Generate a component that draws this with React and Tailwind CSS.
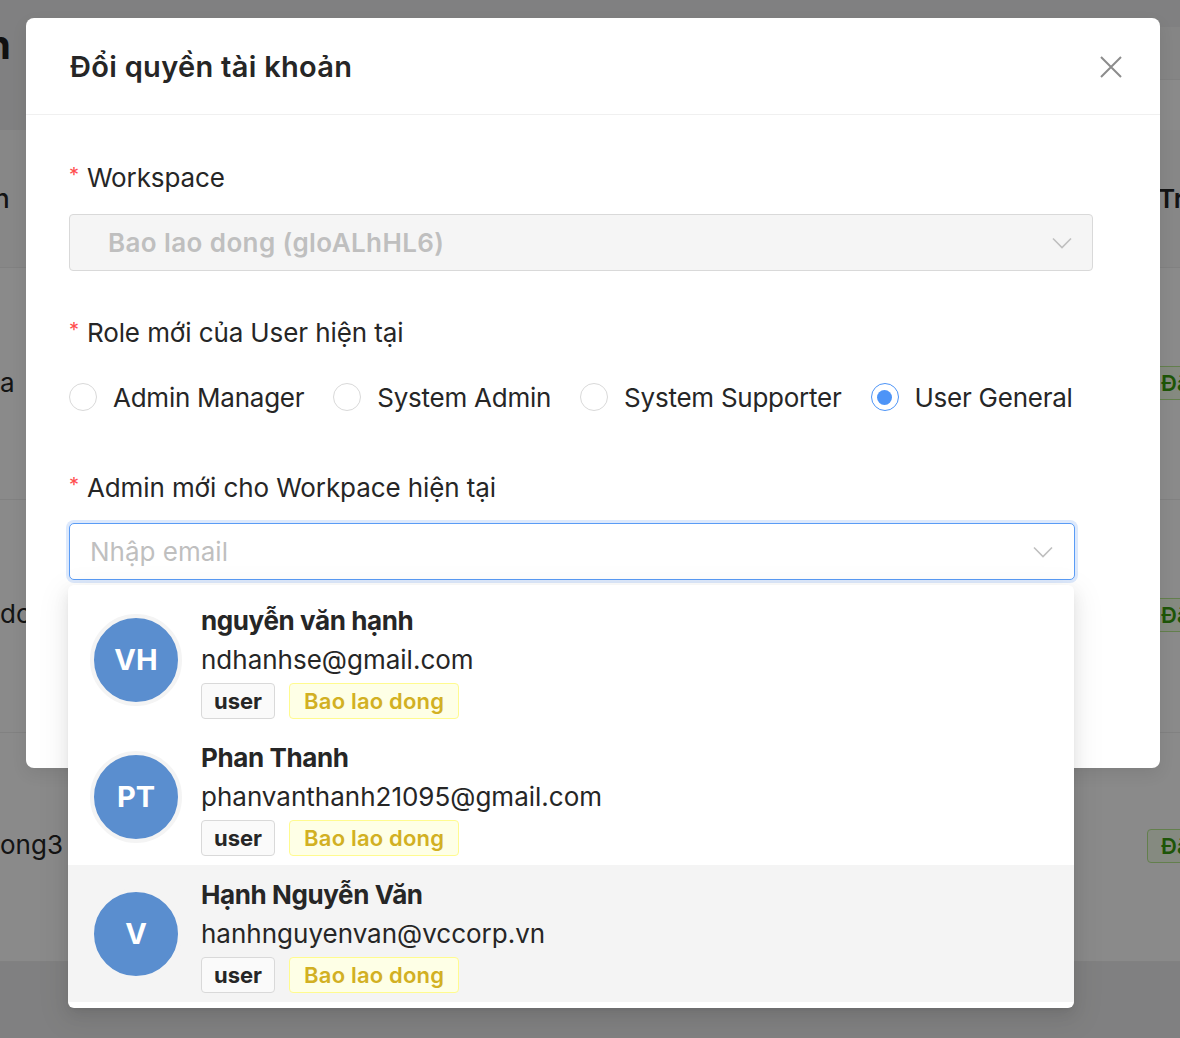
const users = [
  { initials: 'VH', name: 'nguyễn văn hạnh', email: 'ndhanhse@gmail.com', active: false },
  { initials: 'PT', name: 'Phan Thanh', email: 'phanvanthanh21095@gmail.com', active: false },
  { initials: 'V', name: 'Hạnh Nguyễn Văn', email: 'hanhnguyenvan@vccorp.vn', active: true },
];

const roles = [
  { label: 'Admin Manager', checked: false },
  { label: 'System Admin', checked: false },
  { label: 'System Supporter', checked: false },
  { label: 'User General', checked: true },
];

const Chevron = () => (
  <svg width="20" height="12" viewBox="0 0 20 12" fill="none" stroke="#bfbfbf" strokeWidth="1.6">
    <path d="M1 1.5 L10 10.5 L19 1.5" />
  </svg>
);

const Label = ({ children }) => (
  <div className="flex items-center h-[36px] text-[26px] leading-[36px] text-[#262626] tracking-[-0.1px]">
    <span className="text-[#ff4d4f] text-[20px] mr-[8px] mt-[-6px]">*</span>
    {children}
  </div>
);

const GreenTag = () => (
  <div className="h-[34px] w-[60px] border border-[#b7eb8f] bg-[#f6ffed] rounded-[4px] text-[#389e0d] text-[22px] font-semibold leading-[32px] pl-[13px]">
    Đã
  </div>
);

const Row = ({ h, text, textMt }) => (
  <div className={`${h} bg-white border-b border-[#eeeeee] flex items-center text-[26px] text-[#262626]`}>
    <div className={`w-[1147px] shrink-0 ${textMt}`}>{text}</div>
    <div className="mt-[-2px]"><GreenTag /></div>
  </div>
);

const Background = () => (
  <div className="flex flex-col w-full">
    <div className="h-[130px] flex">
      <div className="flex-1 pt-[20px] text-[40px] font-bold text-[#1f1f1f] leading-[50px] ml-[-14px]">
        n
      </div>
      <div className="w-[200px] mt-[27px] bg-white flex flex-col">
        <div className="h-[53px] border-b border-[#ececec] bg-[#f6f6f6]" />
        <div className="flex-1" />
      </div>
    </div>
    <div className="h-[138px] bg-[#fafafa] border-b border-[#eeeeee] flex items-center text-[26px] font-medium text-[#262626]">
      <div className="w-[1158px] shrink-0">
        <span className="ml-[-6px]">n</span>
      </div>
      <span className="font-semibold whitespace-nowrap">Trọng</span>
    </div>
    <Row h="h-[232px]" text="a" textMt="mt-[-2px]" />
    <Row h="h-[233px]" text="dc" textMt="mt-[-6px]" />
    <Row h="h-[229px]" text="ong3" textMt="mt-[-6px]" />
    <div className="flex-1 bg-white h-[80px]" />
  </div>
);

export default function App() {
  return (
    <div
      className="relative w-[1180px] h-[1038px] overflow-hidden bg-[#ececee]"
      style={{ fontFamily: 'Inter, "Noto Sans", sans-serif' }}
    >
      <Background />

      {/* mask */}
      <div className="absolute inset-0 bg-black/[0.46]" />

      {/* modal */}
      <div className="absolute left-[26px] top-[18px] w-[1134px] h-[750px] bg-white rounded-[8px] shadow-[0_6px_16px_rgba(0,0,0,0.08)]">
        <div className="h-[97px] border-b border-[#f0f0f0] flex items-center justify-between pl-[44px] pr-[38px]">
          <h2 className="text-[29px] font-semibold text-[#262626] tracking-[0.3px] mt-[2px]">Đổi quyền tài khoản</h2>
          <svg width="22" height="22" viewBox="0 0 22 22" stroke="#8c8c8c" strokeWidth="2" fill="none" className="mt-[2px]">
            <path d="M1 1 L21 21 M21 1 L1 21" />
          </svg>
        </div>

        <div className="pl-[43px] pt-[45px]">
          <Label>Workspace</Label>
          <div className="mt-[18px] w-[1024px] h-[57px] bg-[#f5f5f5] border border-[#d9d9d9] rounded-[4px] flex items-center justify-between pl-[38px] pr-[20px]">
            <span className="text-[26px] font-semibold text-[#bfbfbf] tracking-[0.4px]">Bao lao dong (gloALhHL6)</span>
            <Chevron />
          </div>

          <div className="mt-[44px]">
            <Label>Role mới của User hiện tại</Label>
          </div>
          <div className="mt-[28px] flex items-center h-[36px] gap-[29px]">
            {roles.map((r) => (
              <div key={r.label} className="flex items-center gap-[16px]">
                {r.checked ? (
                  <span className="w-[28px] h-[28px] rounded-full border border-[#4d94f7] flex items-center justify-center">
                    <span className="w-[15px] h-[15px] rounded-full bg-[#4d94f7]" />
                  </span>
                ) : (
                  <span className="w-[28px] h-[28px] rounded-full border border-[#d9d9d9]" />
                )}
                <span className="text-[26px] text-[#262626] tracking-[-0.25px]">{r.label}</span>
              </div>
            ))}
          </div>

          <div className="mt-[55px]">
            <Label>Admin mới cho Workpace hiện tại</Label>
          </div>
          <div className="mt-[17px] w-[1006px] h-[57px] border border-[#5a9cf6] rounded-[5px] shadow-[0_0_0_3px_#dde9fc] flex items-center justify-between pl-[20px] pr-[21px] bg-white">
            <span className="text-[26px] text-[#bfbfbf]">Nhập email</span>
            <Chevron />
          </div>
        </div>
      </div>

      {/* dropdown */}
      <div className="absolute left-[68px] top-[585px] w-[1006px] py-[6px] bg-white rounded-[6px] shadow-[0_6px_16px_rgba(0,0,0,0.08),0_3px_6px_-4px_rgba(0,0,0,0.12),0_9px_28px_8px_rgba(0,0,0,0.05)]">
        {users.map((u) => (
          <div
            key={u.email}
            className={`h-[137px] flex items-center pl-[22px] ${u.active ? 'bg-[#f4f4f4]' : ''}`}
          >
            <div className="w-[92px] h-[92px] rounded-full border-[4px] border-[#f4f4f4] bg-[#5a8ecf] flex items-center justify-center text-white text-[29px] font-bold shrink-0">
              {u.initials}
            </div>
            <div className="ml-[19px] flex flex-col">
              <div className="text-[26px] leading-[40px] font-bold text-[#262626] tracking-[-0.4px]">{u.name}</div>
              <div className="text-[26px] leading-[40px] text-[#262626] mt-[-1px]">{u.email}</div>
              <div className="mt-[3px] flex gap-[14px]">
                <span className="h-[36px] px-[12px] border border-[#d9d9d9] bg-[#fafafa] rounded-[4px] text-[22px] leading-[34px] font-bold text-[#262626]">
                  user
                </span>
                <span className="h-[36px] px-[14px] border border-[#fffb8f] bg-[#feffe6] rounded-[4px] text-[22px] leading-[34px] font-semibold text-[#d2b023] tracking-[0.2px]">
                  Bao lao dong
                </span>
              </div>
            </div>
          </div>
        ))}
      </div>
    </div>
  );
}
